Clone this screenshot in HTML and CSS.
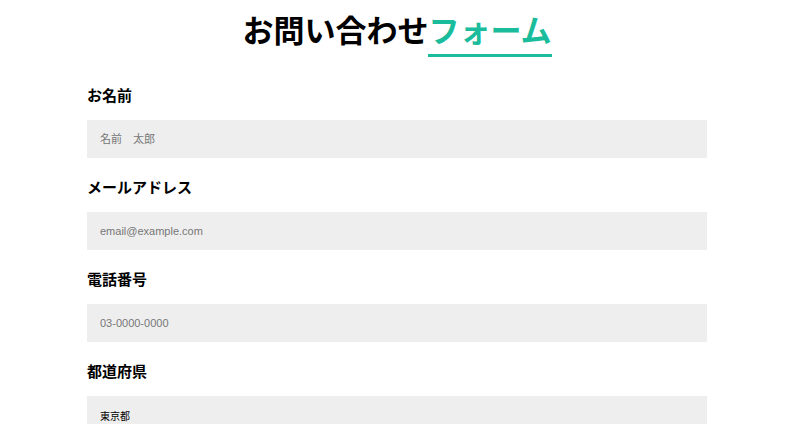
FILE: index.html
```html
<!DOCTYPE html>
<html lang="ja">
<head>
<meta charset="utf-8">
<link rel="stylesheet" href="styles.css">
</head>
<body>
<div class="page">
  <h1 class="title">お問い合わせ<span class="accent">フォーム</span></h1>
  <form class="form">
    <div class="field">
      <label class="label">お名前</label>
      <input class="input" type="text" placeholder="名前　太郎">
    </div>
    <div class="field">
      <label class="label">メールアドレス</label>
      <input class="input" type="email" placeholder="email@example.com">
    </div>
    <div class="field">
      <label class="label">電話番号</label>
      <input class="input" type="tel" placeholder="03-0000-0000">
    </div>
    <div class="field">
      <label class="label">都道府県</label>
      <select class="input select">
        <option>東京都</option>
      </select>
    </div>
  </form>
</div>
</body>
</html>
```
FILE: styles.css
```css
html, body {
  margin: 0;
  padding: 0;
  background: #fff;
}
body {
  font-family: "Noto Sans CJK JP", "Noto Sans", sans-serif;
  color: #000;
}
.page {
  width: 794px;
}
.title {
  margin: 0;
  padding-top: 6px;
  text-align: center;
  font-size: 31px;
  line-height: 46px;
  font-weight: 700;
}
.accent {
  display: inline-block;
  color: #1abc9c;
  padding-bottom: 2px;
  border-bottom: 3px solid #1abc9c;
  vertical-align: top;
}
.form {
  width: 620px;
  margin: 27px auto 0;
}
.field {
  margin-bottom: 18px;
}
.label {
  display: block;
  font-size: 15px;
  line-height: 22px;
  font-weight: 700;
  margin-bottom: 14px;
}
.input {
  display: block;
  box-sizing: border-box;
  width: 100%;
  height: 38px;
  border: none;
  background: #eeeeee;
  padding: 0 13px;
  font-family: "Liberation Sans", "Noto Sans CJK JP", sans-serif;
  font-size: 11px;
  color: #000;
  outline: none;
  border-radius: 0;
}
.input::placeholder {
  color: #777777;
}
.select {
  appearance: none;
  -webkit-appearance: none;
  font-size: 10px;
  font-family: "Noto Sans CJK JP", sans-serif;
}
```
